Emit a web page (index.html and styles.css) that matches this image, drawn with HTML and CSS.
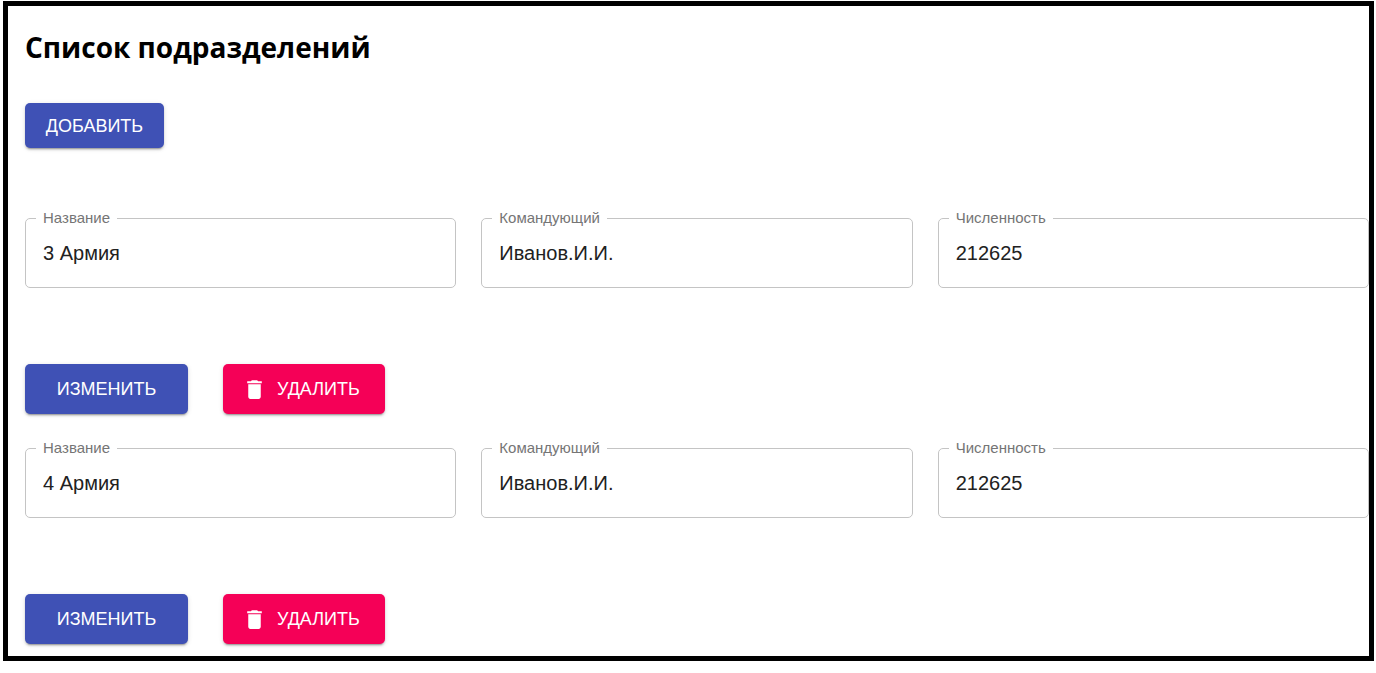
FILE: index.html
```html
<!DOCTYPE html>
<html lang="ru">
<head>
<meta charset="utf-8">
<title>Список подразделений</title>
<link rel="stylesheet" href="styles.css">
</head>
<body>
<main class="page">
  <h1 class="title">Список подразделений</h1>
  <button class="btn btn-primary btn-add" type="button">Добавить</button>
  <section class="units">
    <form class="unit">
      <div class="fields">
        <fieldset class="field"><legend><label for="name-1">Название</label></legend><input id="name-1" type="text" value="3 Армия"></fieldset>
        <fieldset class="field"><legend><label for="chief-1">Командующий</label></legend><input id="chief-1" type="text" value="Иванов.И.И."></fieldset>
        <fieldset class="field"><legend><label for="size-1">Численность</label></legend><input id="size-1" type="text" value="212625"></fieldset>
      </div>
      <div class="actions">
        <button class="btn btn-primary" type="button">Изменить</button>
        <button class="btn btn-danger" type="button"><svg class="icon" viewBox="0 0 24 24" aria-hidden="true"><path d="M6 19c0 1.100.9 2 2 2h8c1.100 0 2-.9 2-2V7H6v12zM19 4h-3.500l-1-1h-5l-1 1H5v2h14V4z"/></svg>Удалить</button>
      </div>
    </form>
    <form class="unit">
      <div class="fields">
        <fieldset class="field"><legend><label for="name-2">Название</label></legend><input id="name-2" type="text" value="4 Армия"></fieldset>
        <fieldset class="field"><legend><label for="chief-2">Командующий</label></legend><input id="chief-2" type="text" value="Иванов.И.И."></fieldset>
        <fieldset class="field"><legend><label for="size-2">Численность</label></legend><input id="size-2" type="text" value="212625"></fieldset>
      </div>
      <div class="actions">
        <button class="btn btn-primary" type="button">Изменить</button>
        <button class="btn btn-danger" type="button"><svg class="icon" viewBox="0 0 24 24" aria-hidden="true"><path d="M6 19c0 1.100.9 2 2 2h8c1.100 0 2-.9 2-2V7H6v12zM19 4h-3.500l-1-1h-5l-1 1H5v2h14V4z"/></svg>Удалить</button>
      </div>
    </form>
  </section>
</main>
</body>
</html>
```
FILE: styles.css
```css
* {
  box-sizing: border-box;
}

body {
  margin: 0;
  background: #fff;
  font-family: "Liberation Sans", Arial, sans-serif;
}

.page {
  margin: 1px 2px 12px 3px;
  padding: 21px 0 12px 17px;
  border: 5px solid #000;
}

.title {
  margin: 0 0 36px;
  font: 700 28px/40px "Open Sans", "Segoe UI", sans-serif;
  color: #000;
}

.btn {
  display: inline-flex;
  align-items: center;
  justify-content: center;
  min-width: 163px;
  height: 50px;
  padding: 0 20px;
  border: 0;
  border-radius: 5px;
  color: #fff;
  font: 400 18px/24px "Liberation Sans", Arial, sans-serif;
  text-transform: uppercase;
  box-shadow: 0 3px 1px -2px rgba(0, 0, 0, .2), 0 2px 2px 0 rgba(0, 0, 0, .14), 0 1px 5px 0 rgba(0, 0, 0, .12);
  cursor: pointer;
}

.btn-primary {
  background: #3f51b5;
}

.btn-danger {
  justify-content: flex-start;
  min-width: 162px;
  padding: 0 24px 0 19px;
  background: #f50057;
}

.btn-add {
  min-width: 139px;
  height: 45px;
}

.icon {
  width: 25px;
  height: 25px;
  margin-right: 10px;
  fill: currentColor;
}

.units {
  display: flex;
  flex-direction: column;
  gap: 26px;
  margin-top: 62px;
}

.fields {
  display: grid;
  grid-template-columns: repeat(3, minmax(0, 1fr));
  gap: 25px;
}

.field {
  min-width: 0;
  margin: 0;
  padding: 14px 16px 22px 10px;
  border: 1px solid #c4c4c4;
  border-radius: 5px;
}

.field legend {
  padding: 0 7px 2px;
  font-size: 15px;
  line-height: 15px;
  color: #757575;
}

.field label {
  display: block;
}

.field input {
  display: block;
  width: 100%;
  height: 24px;
  padding: 0 0 0 7px;
  border: 0;
  outline: 0;
  background: none;
  color: #212121;
  font: 400 20px/24px "Liberation Sans", Arial, sans-serif;
}

.actions {
  display: flex;
  gap: 35px;
  margin-top: 76px;
}
```
